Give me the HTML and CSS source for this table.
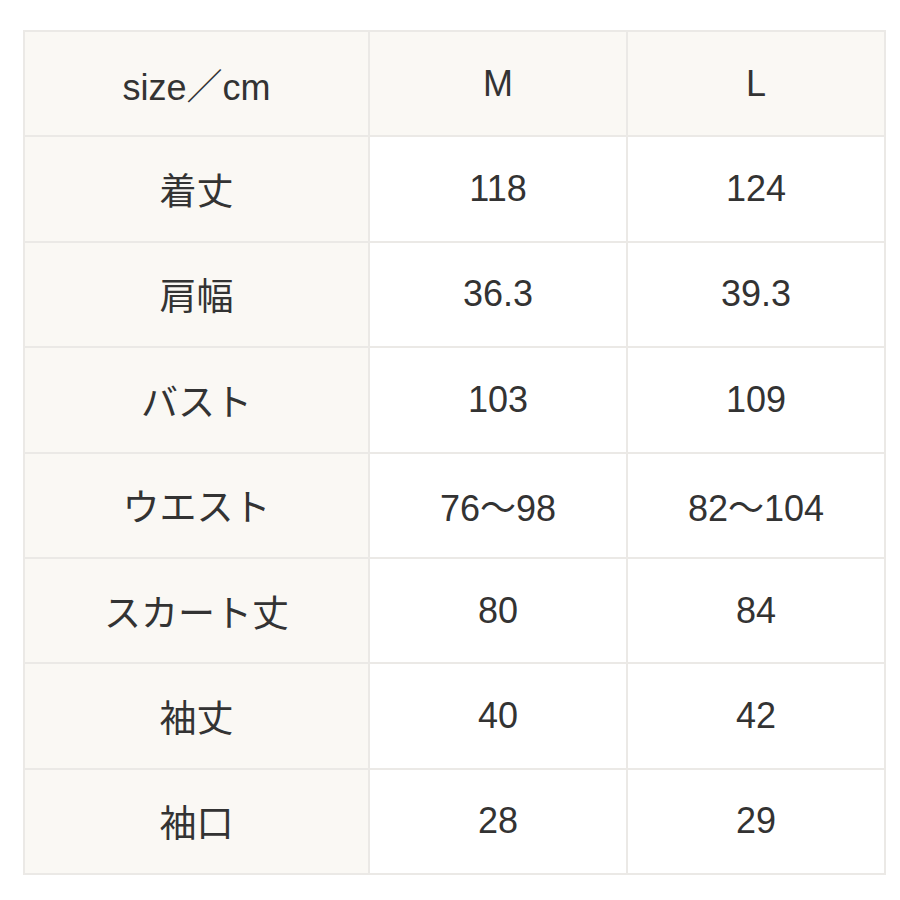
FILE: index.html
```html
<!DOCTYPE html>
<html lang="ja">
<head>
<meta charset="utf-8">
<link rel="stylesheet" href="styles.css">
</head>
<body>
<table class="size-table">
  <colgroup><col class="c-label"><col class="c-size"><col class="c-size"></colgroup>
  <tr class="head"><th>size／cm</th><th>M</th><th>L</th></tr>
  <tr><th class="ja">着丈</th><td>118</td><td>124</td></tr>
  <tr><th class="ja">肩幅</th><td>36.3</td><td>39.3</td></tr>
  <tr><th class="ja">バスト</th><td>103</td><td>109</td></tr>
  <tr><th class="ja">ウエスト</th><td>76〜98</td><td>82〜104</td></tr>
  <tr><th class="ja">スカート丈</th><td>80</td><td>84</td></tr>
  <tr><th class="ja">袖丈</th><td>40</td><td>42</td></tr>
  <tr><th class="ja">袖口</th><td>28</td><td>29</td></tr>
</table>
</body>
</html>
```
FILE: styles.css
```css
html, body {
  margin: 0;
  padding: 0;
  background: #ffffff;
}
body {
  padding: 30px 0 0 23px;
  font-family: "Liberation Sans", "Noto Sans CJK JP", sans-serif;
  color: #333333;
}
.size-table {
  border-collapse: collapse;
  table-layout: fixed;
  width: 862px;
}
.c-label { width: 345px; }
.c-size { width: 258px; }
.size-table th,
.size-table td {
  border: 2px solid #ebe9e6;
  height: 103.4px;
  padding: 0;
  text-align: center;
  vertical-align: middle;
  font-size: 36px;
  font-weight: normal;
}
.size-table th {
  background: #faf8f4;
}
.size-table td {
  background: #ffffff;
}
.size-table .ja {
  font-size: 37px;
}
```
